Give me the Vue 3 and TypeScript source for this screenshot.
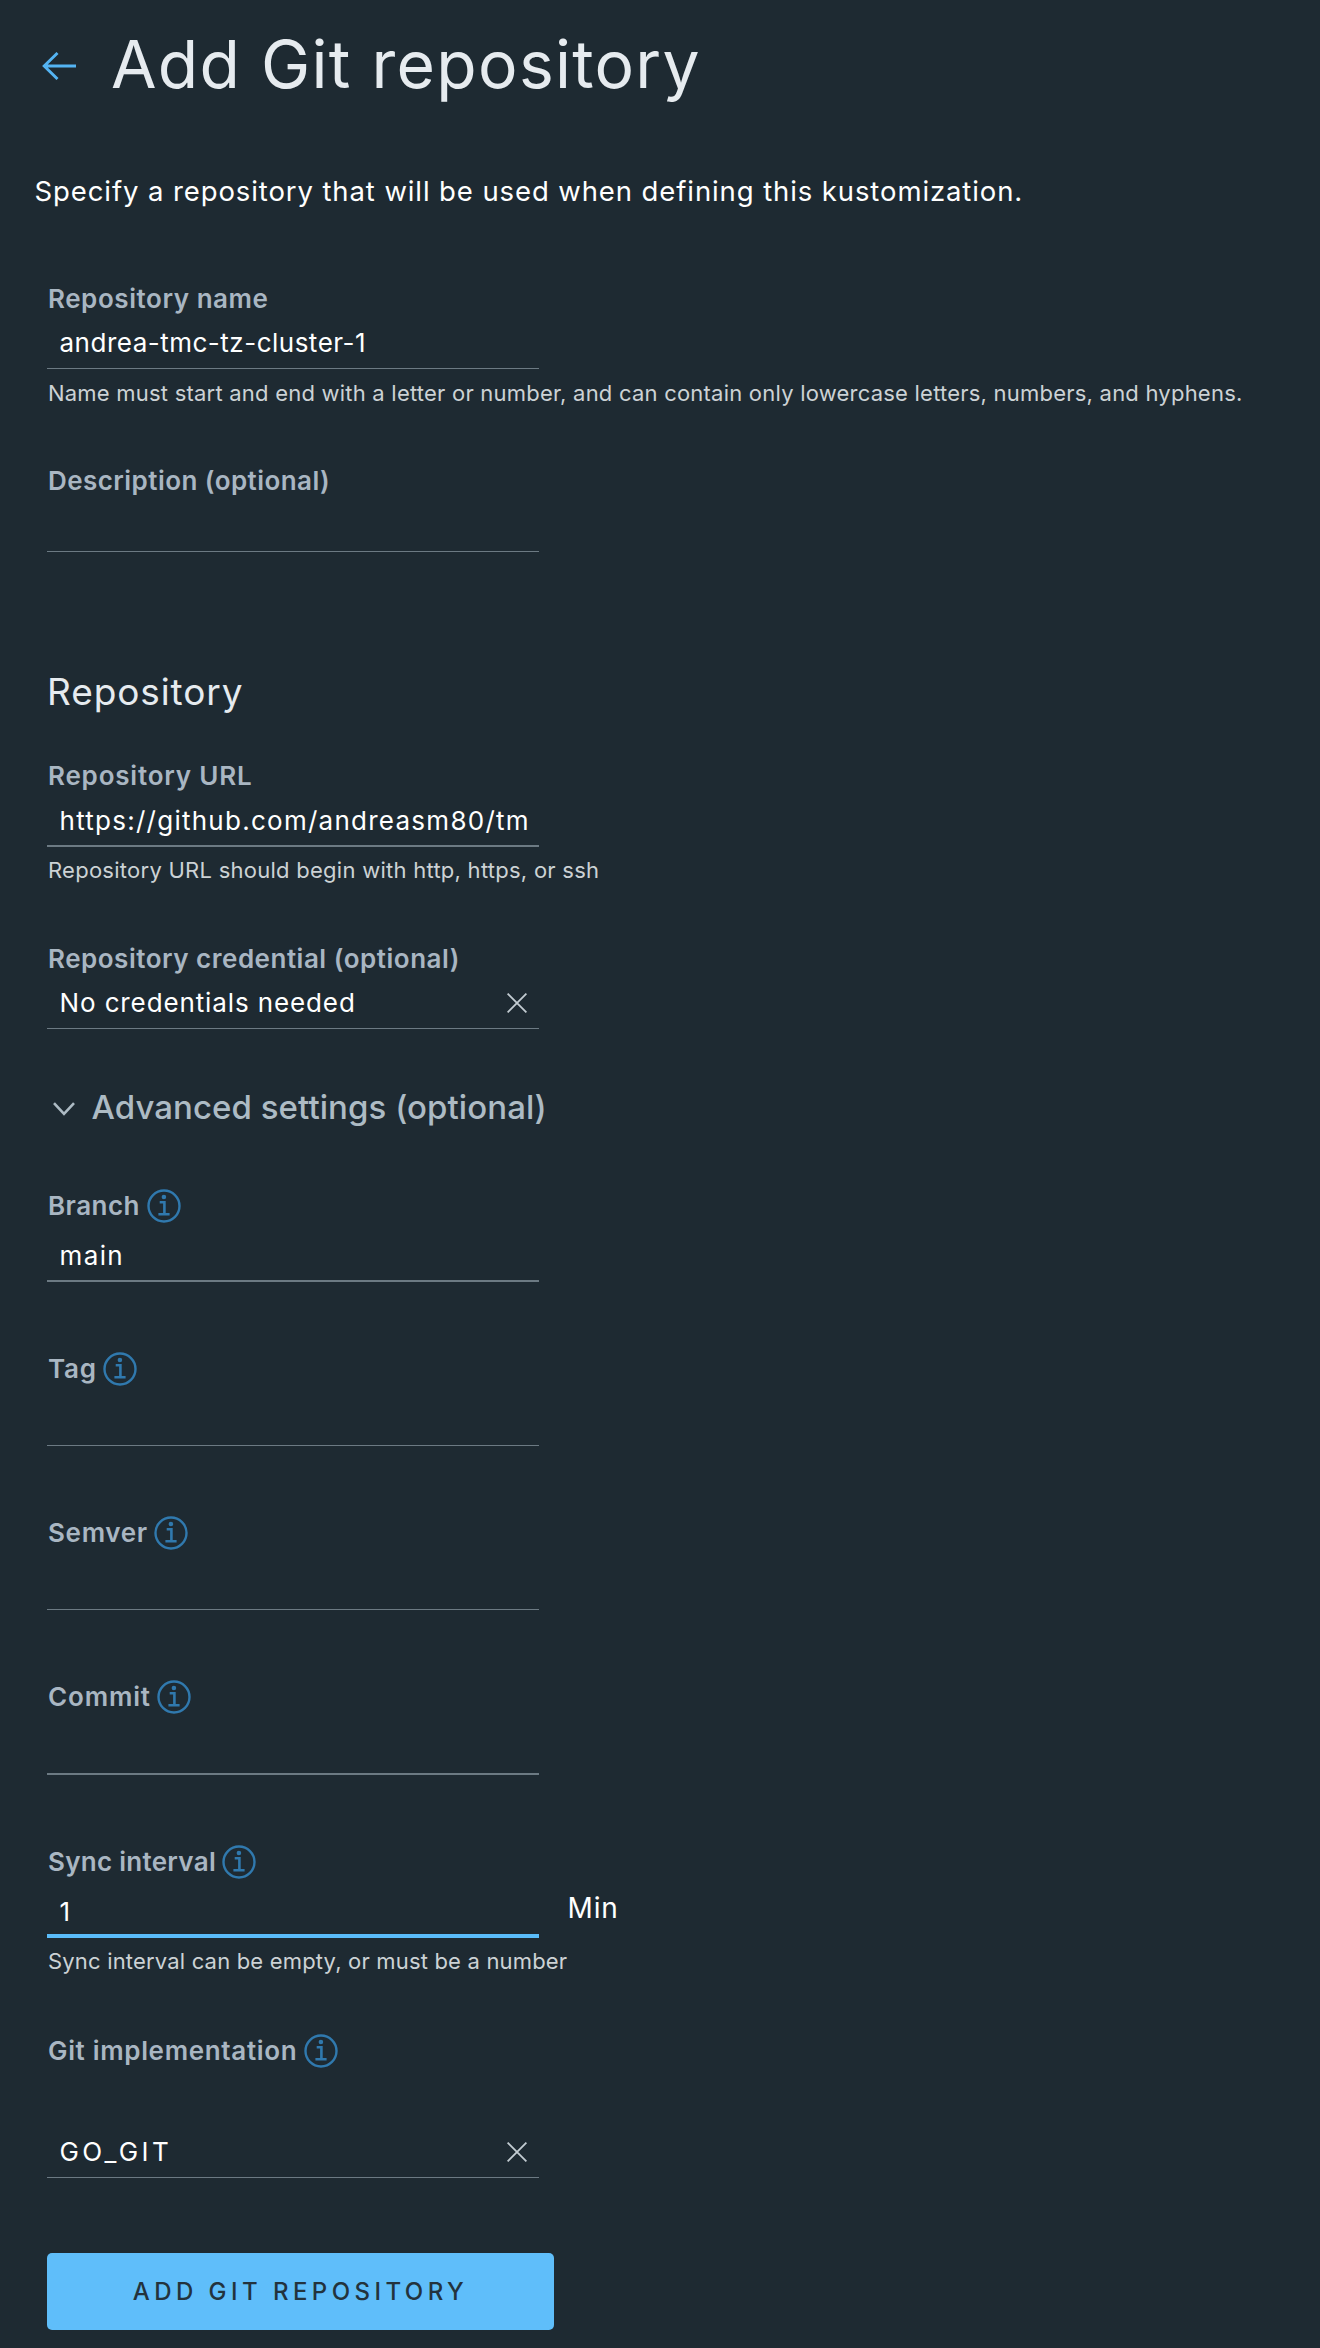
<script setup lang="ts">
interface Field {
  label: string
  labelTracking: number
  value?: string
  tracking?: number
  height: number
  gap: number
  info?: boolean
  clearable?: boolean
  thick?: boolean
  active?: boolean
  unit?: string
  helper?: string
  helperTracking?: number
}

const general: Field[] = [
  {
    label: 'Repository name', labelTracking: 0.56,
    value: 'andrea-tmc-tz-cluster-1', tracking: 0.5,
    height: 86, gap: 75,
    helper: 'Name must start and end with a letter or number, and can contain only lowercase letters, numbers, and hyphens.',
    helperTracking: 0.22,
  },
  { label: 'Description (optional)', labelTracking: 0.44, height: 87, gap: 58 },
]

const repository: Field[] = [
  {
    label: 'Repository URL', labelTracking: 0.8,
    value: 'https://github.com/andreasm80/tm', tracking: 1.26,
    height: 87, gap: 46, thick: true,
    helper: 'Repository URL should begin with http, https, or ssh', helperTracking: 0.26,
  },
  {
    label: 'Repository credential (optional)', labelTracking: 0.51,
    value: 'No credentials needed', tracking: 0.88,
    height: 86, gap: 59, clearable: true,
  },
]

const advanced: Field[] = [
  { label: 'Branch', labelTracking: 0.48, value: 'main', tracking: 1.4, height: 92, gap: 63, info: true, thick: true },
  { label: 'Tag', labelTracking: 0.8, height: 93, gap: 71, info: true },
  { label: 'Semver', labelTracking: 0.68, height: 93, gap: 71, info: true },
  { label: 'Commit', labelTracking: 0.85, height: 94, gap: 71, info: true, thick: true },
  {
    label: 'Sync interval', labelTracking: 0.28, value: '1', tracking: 0,
    height: 92, gap: 71, info: true, active: true, unit: 'Min',
    helper: 'Sync interval can be empty, or must be a number', helperTracking: 0.18,
  },
  {
    label: 'Git implementation', labelTracking: 0.67, value: 'GO_GIT', tracking: 3.4,
    height: 143, gap: 60, info: true, clearable: true,
  },
]

const groups = [
  { id: 'general', fields: general },
  { id: 'repository', fields: repository },
  { id: 'advanced', fields: advanced },
]
</script>

<template>
  <main class="page">
    <header class="head">
      <svg class="back" viewBox="0 0 34 28" fill="none" stroke="#54b4f3" stroke-width="2.9">
        <path d="M15.5 1 2.2 14l13.3 13M2 14h32" />
      </svg>
      <h1>Add Git repository</h1>
    </header>
    <p class="intro">Specify a repository that will be used when defining this kustomization.</p>

    <form class="form" @submit.prevent>
      <section v-for="g in groups" :key="g.id" :class="g.id">
        <h2 v-if="g.id === 'repository'">Repository</h2>
        <h3 v-if="g.id === 'advanced'">
          <svg class="chevron" viewBox="0 0 22 14" fill="none" stroke="#adbbc4" stroke-width="2.6">
            <path d="M1 1.2l10 10.6L21 1.2" />
          </svg>
          <span>Advanced settings (optional)</span>
        </h3>

        <div v-for="f in g.fields" :key="f.label" :style="{ marginTop: f.gap + 'px' }">
          <div
            class="field"
            :class="{ thick: f.thick, active: f.active }"
            :style="{ height: f.height + 'px' }"
          >
            <div class="label">
              <span :style="{ letterSpacing: f.labelTracking + 'px' }">{{ f.label }}</span>
              <svg v-if="f.info" class="info" viewBox="0 0 34 34" fill="none" stroke="#3079ae">
                <circle cx="17" cy="17" r="15.5" stroke-width="2.4" />
                <path d="M12.7 13.2h4.7v12M11.4 25.3h11.2" stroke-width="2.6" />
                <circle cx="16.9" cy="8" r="2.3" fill="#3079ae" stroke="none" />
              </svg>
            </div>
            <div v-if="f.value" class="value">
              <span class="text" :style="{ letterSpacing: f.tracking + 'px' }">{{ f.value }}</span>
              <svg v-if="f.clearable" class="clear" viewBox="0 0 20 20" fill="none" stroke="#c3ccd2" stroke-width="1.8">
                <path d="M.6.6l18.8 18.8M19.4.6.6 19.4" />
              </svg>
              <span v-if="f.unit" class="unit">{{ f.unit }}</span>
            </div>
          </div>
          <p v-if="f.helper" class="helper" :style="{ letterSpacing: f.helperTracking + 'px' }">{{ f.helper }}</p>
        </div>
      </section>

      <button type="submit">Add Git repository</button>
    </form>
  </main>
</template>

<style>
body {
  margin: 0;
  background: #1e2a32;
}
</style>

<style scoped>
.page {
  box-sizing: border-box;
  width: 1320px;
  height: 2348px;
  padding-top: 24px;
  overflow: hidden;
  background: #1e2a32;
  color: #fff;
  font-family: Inter, "Open Sans", sans-serif;
}
h1, h2, h3, p {
  margin: 0;
}
.head {
  display: flex;
  align-items: center;
  height: 80px;
  padding-left: 42px;
  gap: 35px;
}
.back {
  width: 34px;
  height: 28px;
  margin-top: 4px;
}
h1 {
  font-size: 66px;
  font-weight: 400;
  line-height: 80px;
  letter-spacing: 1.28px;
  color: #e6ebef;
  white-space: nowrap;
}
.intro {
  margin: 70px 0 0 34.5px;
  font-size: 27.5px;
  line-height: 34px;
  letter-spacing: 0.9px;
  white-space: nowrap;
}
.form {
  margin-left: 47px;
}
h2 {
  margin-top: 118px;
  font-size: 37px;
  font-weight: 400;
  line-height: 44px;
  letter-spacing: 0.9px;
  color: #e6ebef;
}
h3 {
  display: flex;
  align-items: center;
  height: 40px;
  margin-top: 58px;
  padding-left: 6px;
  gap: 16.5px;
  font-size: 33px;
  font-weight: 500;
  letter-spacing: 0.06px;
  color: #adbbc4;
}
.chevron {
  width: 22px;
  height: 14px;
  margin-top: 4px;
}
.field {
  display: flex;
  flex-direction: column;
  justify-content: space-between;
  box-sizing: border-box;
  width: 492px;
  border-bottom: 1px solid #6c7a83;
}
.field.thick {
  border-bottom-width: 2px;
}
.field.active {
  border-bottom: 4px solid #5abcf9;
}
.label {
  display: flex;
  align-items: center;
  height: 32px;
  padding-left: 1px;
  gap: 6.5px;
  font-size: 26px;
  font-weight: 600;
  line-height: 32px;
  color: #a9b6c2;
  white-space: nowrap;
}
.info {
  flex: none;
  width: 34px;
  height: 34px;
}
.value {
  display: flex;
  align-items: center;
  height: 32px;
  margin-bottom: 9px;
  padding: 0 12.5px;
  font-size: 26px;
  line-height: 32px;
  white-space: nowrap;
}
.thick .value {
  margin-bottom: 8px;
}
.active .value {
  margin-bottom: 6px;
}
.clear {
  width: 20px;
  height: 20px;
  margin-left: auto;
}
.unit {
  margin: -9px -92px 0 auto;
  width: 51px;
  font-size: 28px;
  letter-spacing: 0.9px;
}
.helper {
  height: 28px;
  margin-top: 9px;
  padding-left: 1px;
  font-size: 22px;
  line-height: 28px;
  color: #ccd2d5;
  white-space: nowrap;
}
.general .helper {
  margin-top: 10px;
}
button {
  display: block;
  width: 507px;
  height: 77px;
  margin-top: 75px;
  padding: 0;
  border: 0;
  border-radius: 5px;
  background: #5fbefa;
  color: #23333d;
  font: 500 24px Inter, "Open Sans", sans-serif;
  letter-spacing: 4.45px;
  text-transform: uppercase;
}
</style>
